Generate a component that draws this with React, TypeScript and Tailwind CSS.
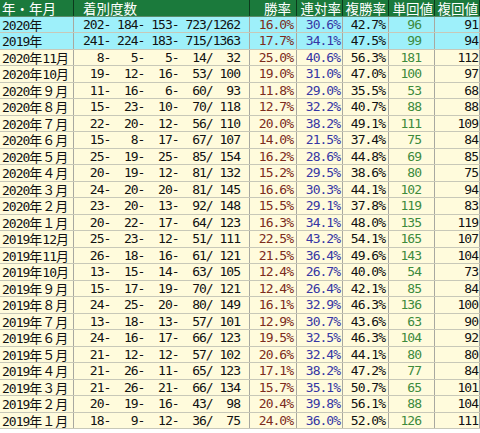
import React from "react";

type Row = {
  label: string;
  counts: [number, number, number, number, number];
  win: string;
  rentai: string;
  fukusho: string;
  tan: number;
  fuku: number;
  total?: boolean;
};

const rows: Row[] = [
  { label: "2020年", counts: [202, 184, 153, 723, 1262], win: "16.0", rentai: "30.6", fukusho: "42.7", tan: 96, fuku: 91, total: true },
  { label: "2019年", counts: [241, 224, 183, 715, 1363], win: "17.7", rentai: "34.1", fukusho: "47.5", tan: 99, fuku: 94, total: true },
  { label: "2020年11月", counts: [8, 5, 5, 14, 32], win: "25.0", rentai: "40.6", fukusho: "56.3", tan: 181, fuku: 112 },
  { label: "2020年10月", counts: [19, 12, 16, 53, 100], win: "19.0", rentai: "31.0", fukusho: "47.0", tan: 100, fuku: 97 },
  { label: "2020年９月", counts: [11, 16, 6, 60, 93], win: "11.8", rentai: "29.0", fukusho: "35.5", tan: 53, fuku: 68 },
  { label: "2020年８月", counts: [15, 23, 10, 70, 118], win: "12.7", rentai: "32.2", fukusho: "40.7", tan: 88, fuku: 88 },
  { label: "2020年７月", counts: [22, 20, 12, 56, 110], win: "20.0", rentai: "38.2", fukusho: "49.1", tan: 111, fuku: 109 },
  { label: "2020年６月", counts: [15, 8, 17, 67, 107], win: "14.0", rentai: "21.5", fukusho: "37.4", tan: 75, fuku: 84 },
  { label: "2020年５月", counts: [25, 19, 25, 85, 154], win: "16.2", rentai: "28.6", fukusho: "44.8", tan: 69, fuku: 85 },
  { label: "2020年４月", counts: [20, 19, 12, 81, 132], win: "15.2", rentai: "29.5", fukusho: "38.6", tan: 80, fuku: 75 },
  { label: "2020年３月", counts: [24, 20, 20, 81, 145], win: "16.6", rentai: "30.3", fukusho: "44.1", tan: 102, fuku: 94 },
  { label: "2020年２月", counts: [23, 20, 13, 92, 148], win: "15.5", rentai: "29.1", fukusho: "37.8", tan: 119, fuku: 83 },
  { label: "2020年１月", counts: [20, 22, 17, 64, 123], win: "16.3", rentai: "34.1", fukusho: "48.0", tan: 135, fuku: 119 },
  { label: "2019年12月", counts: [25, 23, 12, 51, 111], win: "22.5", rentai: "43.2", fukusho: "54.1", tan: 165, fuku: 107 },
  { label: "2019年11月", counts: [26, 18, 16, 61, 121], win: "21.5", rentai: "36.4", fukusho: "49.6", tan: 143, fuku: 104 },
  { label: "2019年10月", counts: [13, 15, 14, 63, 105], win: "12.4", rentai: "26.7", fukusho: "40.0", tan: 54, fuku: 73 },
  { label: "2019年９月", counts: [15, 17, 19, 70, 121], win: "12.4", rentai: "26.4", fukusho: "42.1", tan: 85, fuku: 84 },
  { label: "2019年８月", counts: [24, 25, 20, 80, 149], win: "16.1", rentai: "32.9", fukusho: "46.3", tan: 136, fuku: 100 },
  { label: "2019年７月", counts: [13, 18, 13, 57, 101], win: "12.9", rentai: "30.7", fukusho: "43.6", tan: 63, fuku: 90 },
  { label: "2019年６月", counts: [24, 16, 17, 66, 123], win: "19.5", rentai: "32.5", fukusho: "46.3", tan: 104, fuku: 92 },
  { label: "2019年５月", counts: [21, 12, 12, 57, 102], win: "20.6", rentai: "32.4", fukusho: "44.1", tan: 80, fuku: 80 },
  { label: "2019年４月", counts: [21, 26, 11, 65, 123], win: "17.1", rentai: "38.2", fukusho: "47.2", tan: 77, fuku: 84 },
  { label: "2019年３月", counts: [21, 26, 21, 66, 134], win: "15.7", rentai: "35.1", fukusho: "50.7", tan: 65, fuku: 101 },
  { label: "2019年２月", counts: [20, 19, 16, 43, 98], win: "20.4", rentai: "39.8", fukusho: "56.1", tan: 88, fuku: 104 },
  { label: "2019年１月", counts: [18, 9, 12, 36, 75], win: "24.0", rentai: "36.0", fukusho: "52.0", tan: 126, fuku: 111 },
];

const pad = (n: number, w: number) => String(n).padStart(w, " ");

const countText = (c: Row["counts"]) =>
  `${pad(c[0], 3)}- ${pad(c[1], 3)}- ${pad(c[2], 3)}- ${pad(c[3], 3)}/${pad(c[4], 4)}`;

const mono = "font-['DejaVu_Sans_Mono',monospace] text-[13px] tracking-[-1px] whitespace-pre";
const cjk = "font-['Noto_Sans_CJK_JP',sans-serif] text-[13px]";

// ascii digits go in the narrow mono face, kanji / full-width digits stay full width
function Label({ text }: { text: string }) {
  const parts = text.split(/([0-9]+)/).filter(Boolean);
  return (
    <>
      {parts.map((p, i) =>
        /^[0-9]+$/.test(p) ? (
          <span key={i} className={mono}>{p}</span>
        ) : (
          <span key={i} className={cjk}>{p}</span>
        )
      )}
    </>
  );
}

export default function App() {
  return (
    <div className="w-[480px] h-[433px] bg-white">
      {/* header */}
      <div className="grid grid-cols-[74px_176px_47px_46px_46px_46px_45px] h-[16.5px] bg-[#1b7a3c] text-white font-['Noto_Sans_CJK_JP',sans-serif] text-[13.5px] leading-[16px] border-b border-[#5a8a6a]">
        <div className="pl-[2px] border-r border-[#0c3a1c]">年・年月</div>
        <div className="pl-[9px] border-r border-[#0c3a1c]">着別度数</div>
        <div className="text-right pr-[5px] border-r border-[#0c3a1c]">勝率</div>
        <div className="text-right pr-[1px] border-r border-[#0c3a1c]">連対率</div>
        <div className="text-right pr-[2px] border-r border-[#0c3a1c]">複勝率</div>
        <div className="text-right pr-[1px] border-r border-[#0c3a1c]">単回値</div>
        <div className="text-right pr-[1px] border-r border-[#0c3a1c]">複回値</div>
      </div>

      {rows.map((r) => (
        <div
          key={r.label}
          className={`grid grid-cols-[74px_176px_47px_46px_46px_46px_45px] h-[16.5px] leading-[15.5px] border-b border-[#c8c8b8] ${
            r.total ? "bg-[#9ef0fa]" : "bg-[#fffbdc]"
          }`}
        >
          <div className="pl-[2px] border-r border-[#a8a8a0] text-[#111] whitespace-nowrap overflow-hidden">
            <Label text={r.label} />
          </div>
          <div className={`text-right pr-[9px] border-r border-[#a8a8a0] text-[#111] ${mono}`}>{countText(r.counts)}</div>
          <div className={`text-right pr-[3px] border-r border-[#a8a8a0] text-[#7c2c1c] ${mono}`}>{r.win}%</div>
          <div className={`text-right pr-[2px] border-r border-[#a8a8a0] text-[#3636a4] ${mono}`}>{r.rentai}%</div>
          <div className={`text-right pr-[3px] border-r border-[#a8a8a0] text-[#111] ${mono}`}>{r.fukusho}%</div>
          <div className={`text-right pr-[13px] border-r border-[#a8a8a0] text-[#3d8a3d] ${mono}`}>{r.tan}</div>
          <div className={`text-right pr-[1px] border-r border-[#a8a8a0] text-[#111] ${mono}`}>{r.fuku}</div>
        </div>
      ))}
    </div>
  );
}
